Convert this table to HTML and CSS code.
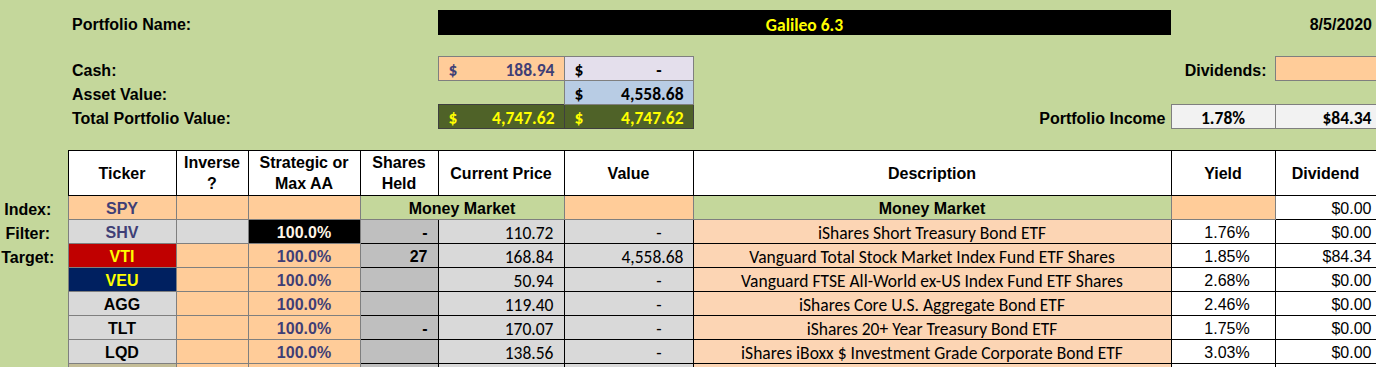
FILE: index.html
```html
<!DOCTYPE html>
<html>
<head>
<meta charset="utf-8">
<title>Galileo 6.3</title>
<link rel="stylesheet" href="styles.css">
</head>
<body>
<table class="sheet">
<colgroup>
<col class="w68"><col class="w108"><col class="w72"><col class="w112"><col class="w78"><col class="w126"><col class="w129"><col class="w478"><col class="w104"><col class="w101">
</colgroup>
<tr class="h10"><td colspan="10"></td></tr>
<tr class="h25"><td></td><td colspan="4" class="lbl">Portfolio Name:</td><td colspan="3" class="name cal">Galileo 6.3</td><td></td><td class="lbl right">8/5/2020</td></tr>
<tr class="h21"><td colspan="10"></td></tr>
<tr class="h24"><td></td><td colspan="4" class="lbl">Cash:</td>
<td class="box in cal b"><div class="acc"><span>$</span><span>188.94</span></div></td>
<td class="box lav cal b"><div class="acc"><span>$</span><span class="dash">-</span></div></td>
<td></td><td class="lbl right pr8">Dividends:</td><td class="box in"></td></tr>
<tr class="h24"><td></td><td colspan="4" class="lbl">Asset Value:</td><td></td>
<td class="box blu cal b"><div class="acc"><span>$</span><span>4,558.68</span></div></td>
<td></td><td></td><td></td></tr>
<tr class="h24"><td></td><td colspan="4" class="lbl">Total Portfolio Value:</td>
<td class="box olv cal b"><div class="acc"><span>$</span><span>4,747.62</span></div></td>
<td class="box olv cal b"><div class="acc"><span>$</span><span>4,747.62</span></div></td>
<td class="lbl right pr5">Portfolio Income</td>
<td class="box inc cal b center">1.78%</td>
<td class="box inc cal b right">$84.34</td></tr>
<tr class="h22"><td colspan="10"></td></tr>
<tr class="hh"><td></td>
<td class="hd">Ticker</td><td class="hd wrap">Inverse ?</td><td class="hd wrap">Strategic or Max AA</td><td class="hd wrap">Shares Held</td><td class="hd">Current Price</td><td class="hd">Value</td><td class="hd">Description</td><td class="hd">Yield</td><td class="hd">Dividend</td></tr>

<tr class="h24"><td class="side">Index:</td>
<td class="in b center">SPY</td><td class="in"></td><td class="in"></td>
<td colspan="2" class="mm b center">Money Market</td><td class="in"></td>
<td class="mm b center">Money Market</td><td class="in"></td><td class="wh right">$0.00</td></tr>

<tr class="h24"><td class="side">Filter:</td>
<td class="gr inp b center">SHV</td><td class="gr ing"></td><td class="blk b center">100.0%</td>
<td class="dg b right pr10">-</td><td class="gr cal right pr10">110.72</td><td class="gr cal"><div class="acc"><span></span><span class="dash">-</span></div></td>
<td class="desc cal center">iShares Short Treasury Bond ETF</td><td class="wh center yl">1.76%</td><td class="wh right">$0.00</td></tr>

<tr class="h24"><td class="side">Target:</td>
<td class="red b center ing">VTI</td><td class="in"></td><td class="in b center">100.0%</td>
<td class="dg b right pr10">27</td><td class="gr cal right pr10">168.84</td><td class="gr cal right pr9">4,558.68</td>
<td class="desc cal center">Vanguard Total Stock Market Index Fund ETF Shares</td><td class="wh center yl">1.85%</td><td class="wh right">$84.34</td></tr>

<tr class="h24"><td></td>
<td class="navy b center ing">VEU</td><td class="in"></td><td class="in b center">100.0%</td>
<td class="dg"></td><td class="gr cal right pr10">50.94</td><td class="gr cal"><div class="acc"><span></span><span class="dash">-</span></div></td>
<td class="desc cal center">Vanguard FTSE All-World ex-US Index Fund ETF Shares</td><td class="wh center yl">2.68%</td><td class="wh right">$0.00</td></tr>

<tr class="h24"><td></td>
<td class="gr b center ing">AGG</td><td class="in"></td><td class="in b center">100.0%</td>
<td class="dg"></td><td class="gr cal right pr10">119.40</td><td class="gr cal"><div class="acc"><span></span><span class="dash">-</span></div></td>
<td class="desc cal center">iShares Core U.S. Aggregate Bond ETF</td><td class="wh center yl">2.46%</td><td class="wh right">$0.00</td></tr>

<tr class="h24"><td></td>
<td class="gr b center ing">TLT</td><td class="in"></td><td class="in b center">100.0%</td>
<td class="dg b right pr10">-</td><td class="gr cal right pr10">170.07</td><td class="gr cal"><div class="acc"><span></span><span class="dash">-</span></div></td>
<td class="desc cal center">iShares 20+ Year Treasury Bond ETF</td><td class="wh center yl">1.75%</td><td class="wh right">$0.00</td></tr>

<tr class="h24"><td></td>
<td class="gr b center ing">LQD</td><td class="in"></td><td class="in b center">100.0%</td>
<td class="dg"></td><td class="gr cal right pr10">138.56</td><td class="gr cal"><div class="acc"><span></span><span class="dash">-</span></div></td>
<td class="desc cal center">iShares iBoxx $ Investment Grade Corporate Bond ETF</td><td class="wh center yl">3.03%</td><td class="wh right">$0.00</td></tr>

<tr class="h24"><td></td>
<td class="tan ing"></td><td class="in"></td><td class="in"></td>
<td class="dg"></td><td class="gr"></td><td class="gr"></td>
<td class="desc"></td><td class="wh"></td><td class="wh"></td></tr>
</table>
</body>
</html>
```
FILE: styles.css
```css
html, body {
  margin: 0;
  padding: 0;
  background: #C4D79B;
  overflow: hidden;
}
body {
  font-family: "Liberation Sans", Arial, sans-serif;
  font-size: 16px;
  color: #000;
}
.sheet {
  border-collapse: collapse;
  table-layout: fixed;
  width: 1376px;
}
.w68 { width: 68px; }
.w108 { width: 108px; }
.w72 { width: 72px; }
.w112 { width: 112px; }
.w78 { width: 78px; }
.w126 { width: 126px; }
.w129 { width: 129px; }
.w478 { width: 478px; }
.w104 { width: 104px; }
.w101 { width: 101px; }

.sheet td {
  padding: 0 4px;
  white-space: nowrap;
  vertical-align: middle;
  line-height: 18px;
  overflow: visible;
}
.h10 td { height: 10px; padding: 0; line-height: 0; }
.h25 td { height: 24px; vertical-align: bottom; padding-bottom: 1px; }
.h21 td { height: 21px; padding: 0; line-height: 0; }
.h22 td { height: 21px; padding: 0; line-height: 0; }
.h24 td { height: 22px; vertical-align: bottom; padding-bottom: 1px; }
.hh td { height: 44px; }

.lbl { font-weight: bold; }
.right { text-align: right; }
.center { text-align: center; }
.b { font-weight: bold; }
.pr5 { padding-right: 5px !important; }
.pr8 { padding-right: 8px !important; }
.pr9 { padding-right: 9px !important; }
.pr10 { padding-right: 10px !important; }

.cal {
  font-family: Carlito, Calibri, Lato, "Liberation Sans", sans-serif;
  font-size: 17.5px;
}
.name {
  background: #000;
  color: #FFFF00;
  font-weight: bold;
  text-align: center;
}
.box { border: 1px solid #7F7F7F; }
.acc {
  display: flex;
  justify-content: space-between;
  padding: 0 5px 0 6px;
}
.dash { padding-right: 22px; }
.in {
  background: #FFCC99;
  color: #3F3F76;
  border: 1px solid #7F7F7F;
}
.lav { background: #E4DFEC; }
.blu { background: #B8CCE4; }
.olv {
  background: #4F6228;
  color: #FFFF00;
  border-color: #3F3F3F;
}
.inc { background: #F2F2F2; }

.hd {
  background: #fff;
  border: 1px solid #000;
  font-weight: bold;
  text-align: center;
  white-space: normal !important;
  line-height: 21px !important;
}
.side {
  font-weight: bold;
  text-align: center;
  padding: 0 12px 1px 0 !important;
}
.mm {
  background: #C4D79B;
  border: 1px solid #7F7F7F;
}
.gr {
  background: #D9D9D9;
  border: 1px solid #000;
}
.inp { color: #3F3F76; border-color: #7F7F7F; }
.ing { border-color: #7F7F7F; }
.dg {
  background: #BFBFBF;
  border: 1px solid #000;
}
.blk {
  background: #000;
  color: #FFF5E6;
  border: 1px solid #7F7F7F;
}
.red {
  background: #C00000;
  color: #FFFF00;
  border: 1px solid #7F7F7F;
}
.navy {
  background: #002060;
  color: #FFFF00;
  border: 1px solid #7F7F7F;
}
.tan {
  background: #C4BD97;
  border: 1px solid #7F7F7F;
}
.desc {
  background: #FCD5B4;
  border: 1px solid #000;
}
.wh {
  background: #fff;
  border: 1px solid #000;
}
.yl { padding-left: 12px !important; }
```
